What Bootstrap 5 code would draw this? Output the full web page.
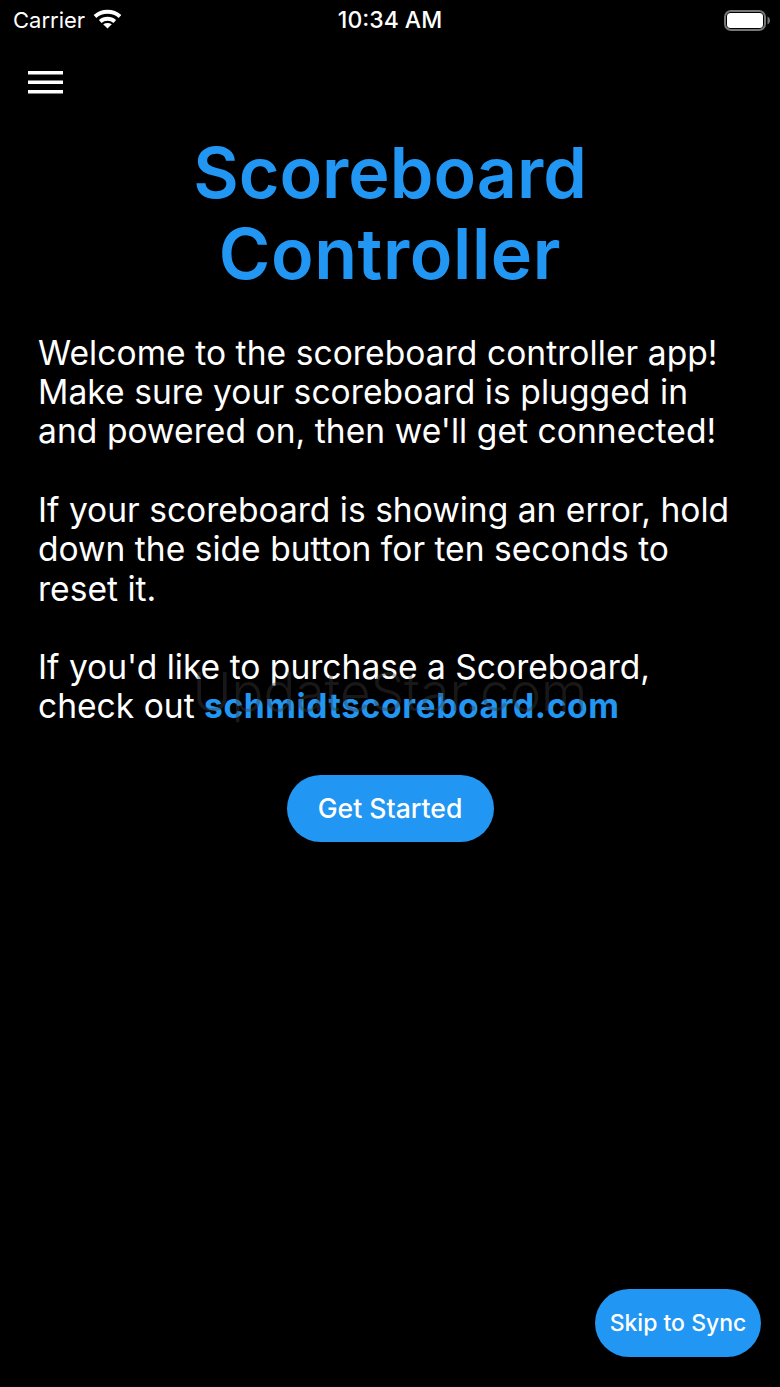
<!DOCTYPE html>
<html lang="en">
<head>
<meta charset="utf-8">
<title>Scoreboard Controller</title>
<link href="https://cdn.jsdelivr.net/npm/bootstrap@5.3.0/dist/css/bootstrap.min.css" rel="stylesheet">
<style>
html,body{height:100%;background:#000;}
body{font-family:Inter,"Liberation Sans",sans-serif;color:#fff;overflow:hidden;}
.app-screen{height:1387px;width:780px;}
.status-strip{height:40px;padding:0 10px;font-size:22px;line-height:40px;}
.status-side{flex:1 1 0;}
.carrier-name{padding-left:3px;}
.clock{font-weight:500;font-size:23px;}
.menu-bar{height:92px;padding:31px 0 0 28px;}
.burger{display:block;width:35px;height:23px;padding:0;border:0;background:transparent;}
.app-title{font-size:70px;line-height:81px;font-weight:600;color:#2196f3;margin:0;}
.title-second{letter-spacing:.6px;}
.intro-block{position:relative;padding:0 38px;margin-top:38.5px;font-size:33.6px;line-height:39.4px;}
.intro-block p{margin:0 0 39px;white-space:nowrap;}
.intro-block p:last-of-type{margin:0;}
.first-para{letter-spacing:.05px;}
.site-link{color:#2196f3;font-weight:700;text-decoration:none;letter-spacing:.6px;}
.watermark{position:absolute;left:0;right:0;top:335px;text-align:center;font-size:53px;font-weight:300;line-height:48px;color:rgba(60,60,60,.4);pointer-events:none;}
.pill-btn{background:#2196f3;color:#fff;border:0;border-radius:34px;font-weight:500;font-size:26.6px;height:67px;padding:0;}
.pill-btn:hover{background:#2196f3;color:#fff;}
.start-btn{width:207px;margin-top:49.5px;}
.skip-btn{width:166px;height:68px;margin:0 19px 30px 0;font-size:23px;}
</style>
</head>
<body>
<div class="app-screen d-flex flex-column">
  <div class="status-strip d-flex align-items-center">
    <div class="status-side d-flex align-items-center gap-2">
      <span class="carrier-name">Carrier</span>
      <svg width="29" height="22" viewBox="0 1 29 22" fill="none" stroke="#fff" stroke-width="4">
        <path d="M2 8.5C9 2.2 20 2.2 27 8.5"/>
        <path d="M7.2 13.5C11.500 9.800 17.500 9.800 21.800 13.500"/>
        <path d="M14.500 20.500L10.200 16.200C12.700 14.600 16.300 14.600 18.800 16.200Z" fill="#fff" stroke="none"/>
      </svg>
    </div>
    <div class="clock">10:34 AM</div>
    <div class="status-side d-flex justify-content-end align-items-center">
      <svg width="46" height="21" viewBox="0 0 46 21">
        <rect x="1" y="1" width="40" height="19" rx="6" fill="none" stroke="#777" stroke-width="2"/>
        <rect x="3" y="3" width="36" height="15" rx="3.500" fill="#fff"/>
        <path d="M43.500 6.500C45.200 7.300 46 8.800 46 10.500s-.8 3.200-2.500 4Z" fill="#777"/>
      </svg>
    </div>
  </div>
  <div class="menu-bar">
    <button class="burger" type="button" aria-label="Menu">
      <svg width="35" height="23" viewBox="0 0 35 23" fill="#fff" class="d-block">
        <rect y="0" width="35" height="3.500"/>
        <rect y="9.500" width="35" height="3.500"/>
        <rect y="19" width="35" height="3.500"/>
      </svg>
    </button>
  </div>
  <h1 class="app-title text-center">Scoreboard<br><span class="title-second">Controller</span></h1>
  <div class="intro-block">
    <p class="first-para">Welcome to the scoreboard controller app!<br>Make sure your scoreboard is plugged in<br>and powered on, then we'll get connected!</p>
    <p>If your scoreboard is showing an error, hold<br>down the side button for ten seconds to<br>reset it.</p>
    <p>If you'd like to purchase a Scoreboard,<br>check out <a class="site-link" href="#">schmidtscoreboard.com</a></p>
    <div class="watermark">UpdateStar.com</div>
  </div>
  <button class="btn pill-btn start-btn align-self-center" type="button">Get Started</button>
  <button class="btn pill-btn skip-btn mt-auto align-self-end" type="button">Skip to Sync</button>
</div>
<script src="https://cdn.jsdelivr.net/npm/bootstrap@5.3.0/dist/js/bootstrap.bundle.min.js"></script>
</body>
</html>
